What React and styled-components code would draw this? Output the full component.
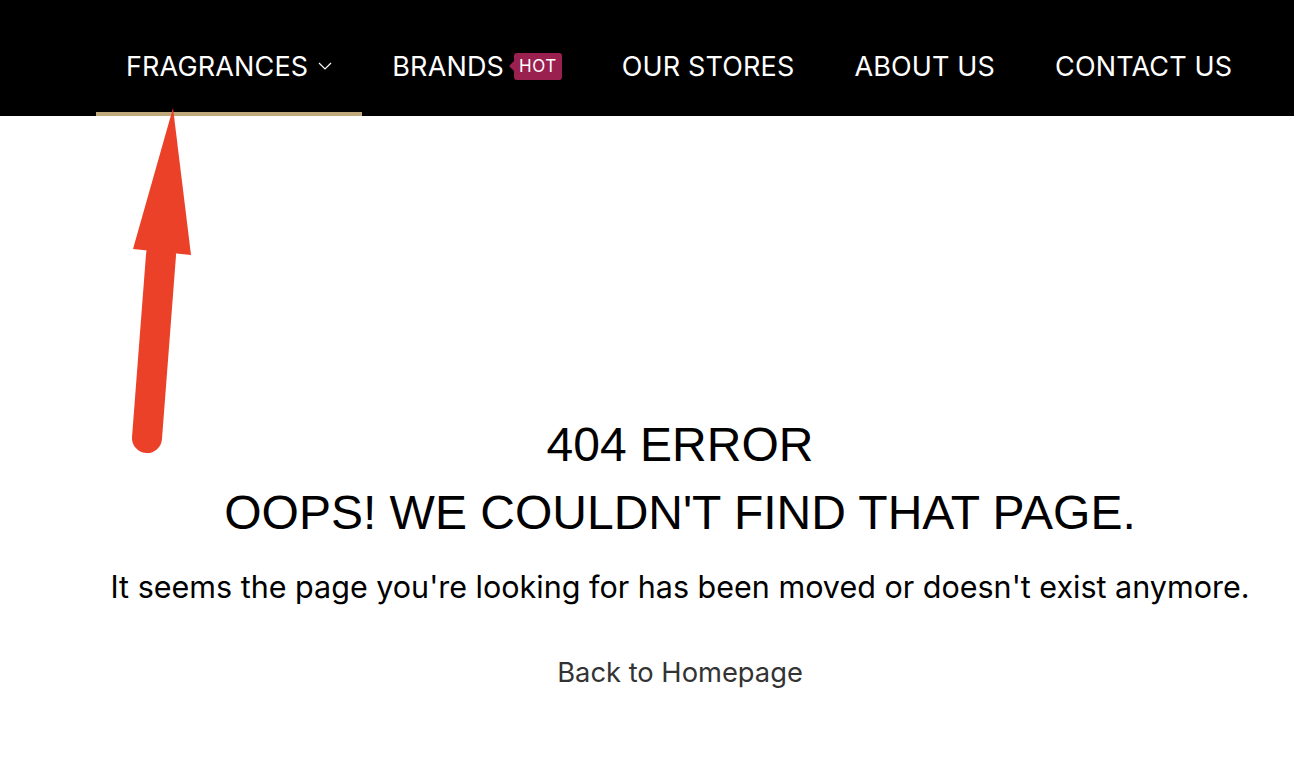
import React from "react";
import styled, { createGlobalStyle } from "styled-components";

const Global = createGlobalStyle`
  html, body { margin: 0; padding: 0; background: #fff; }
  body { font-family: Inter, "Liberation Sans", sans-serif; }
`;

const Page = styled.div`
  position: relative;
  width: 1294px;
  min-height: 768px;
  overflow: hidden;
`;

const NavBar = styled.nav`
  background: #000;
  height: 116px;
  display: flex;
  align-items: stretch;
  padding-left: 96px;
`;

const NavItem = styled.a`
  display: flex;
  align-items: center;
  gap: 10px;
  padding: 0 30px;
  color: #fff;
  font-family: Inter, "Liberation Sans", sans-serif;
  font-size: 27px;
  letter-spacing: 0.15px;
  text-decoration: none;
  box-sizing: border-box;
  border-bottom: 4px solid ${(p) => (p.$active ? "#c0aa7b" : "transparent")};
  padding-top: 20px;
`;

const Badge = styled.span`
  position: relative;
  background: #9a2050;
  color: #fff;
  font-size: 17px;
  line-height: 1;
  padding: 5px 5px 5px;
  border-radius: 3px;
  letter-spacing: 0.5px;
  &::before {
    content: "";
    position: absolute;
    left: -5px;
    top: 50%;
    margin-top: -5px;
    border-top: 5px solid transparent;
    border-bottom: 5px solid transparent;
    border-right: 5px solid #9a2050;
  }
`;

const Main = styled.main`
  display: flex;
  flex-direction: column;
  align-items: center;
  padding: 295px 0 0 66px;
  text-align: center;
`;

const Title = styled.h1`
  margin: 0;
  font-family: "Liberation Sans", Arial, sans-serif;
  font-weight: 400;
  font-size: 48px;
  line-height: 68px;
  color: #000;
`;

const Message = styled.p`
  margin: 20px 0 0;
  font-family: Inter, "Liberation Sans", sans-serif;
  font-size: 30.5px;
  line-height: 40px;
  color: #000;
`;

const BackLink = styled.a`
  margin-top: 49px;
  font-family: Inter, "Liberation Sans", sans-serif;
  font-size: 27.3px;
  color: #333;
  text-decoration: none;
`;

const ArrowSvg = styled.svg`
  position: absolute;
  left: 0;
  top: 0;
  pointer-events: none;
`;

const Chevron = () => (
  <svg width="14" height="8" viewBox="0 0 14 8" fill="none">
    <path d="M1 1l6 6 6-6" stroke="#fff" strokeWidth="1.2" />
  </svg>
);

export default function App() {
  return (
    <Page>
      <Global />
      <NavBar>
        <NavItem $active>
          FRAGRANCES <Chevron />
        </NavItem>
        <NavItem>
          BRANDS <Badge>HOT</Badge>
        </NavItem>
        <NavItem>OUR STORES</NavItem>
        <NavItem>ABOUT US</NavItem>
        <NavItem>CONTACT US</NavItem>
      </NavBar>
      <Main>
        <Title>404 ERROR</Title>
        <Title>OOPS! WE COULDN'T FIND THAT PAGE.</Title>
        <Message>It seems the page you're looking for has been moved or doesn't exist anymore.</Message>
        <BackLink href="#">Back to Homepage</BackLink>
      </Main>
      <ArrowSvg width="1294" height="768" viewBox="0 0 1294 768">
        <path d="M147 438 L161 255" stroke="#ec4129" strokeWidth="30" strokeLinecap="round" fill="none" />
        <polygon points="173,108 133,249 191,255" fill="#ec4129" />
      </ArrowSvg>
    </Page>
  );
}
